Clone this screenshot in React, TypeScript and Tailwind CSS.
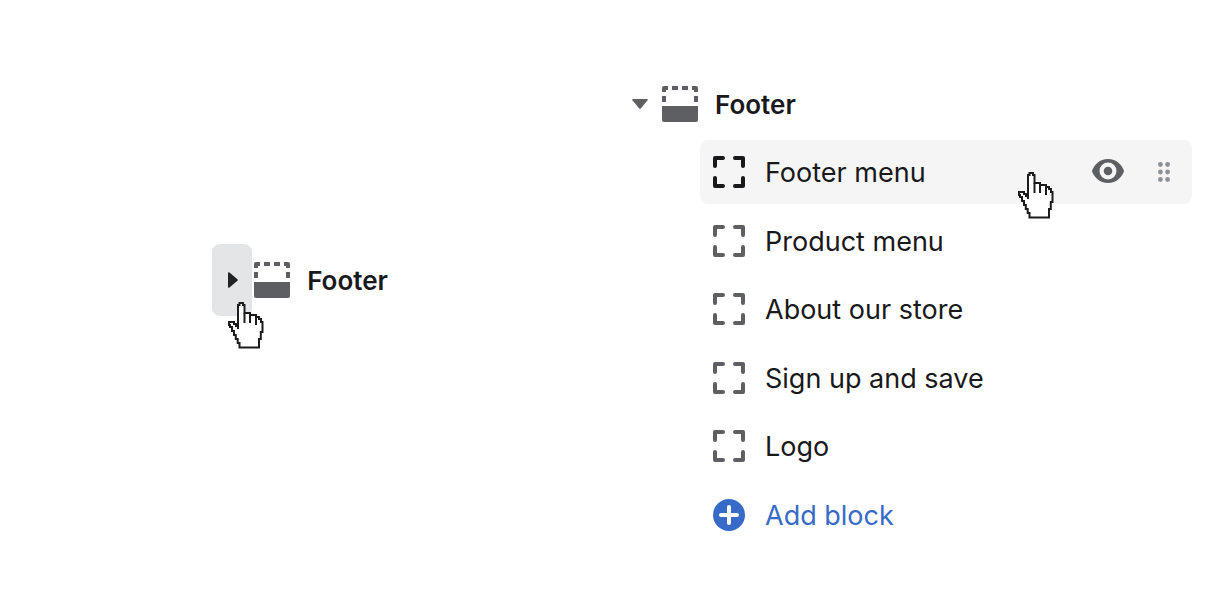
import React from "react";

const blocks = ["Footer menu", "Product menu", "About our store", "Sign up and save", "Logo"];

function HandCursor({ className }: { className: string }) {
  return (
    <svg
      aria-hidden="true"
      viewBox="0 0 36 47"
      className={`pointer-events-none absolute h-[47px] w-9 ${className}`}
      fill="none"
      stroke="#1c1c1e"
      strokeWidth="2"
    >
      <path
        d="M10 24V3H11.5V1H15V3H16.5V11H22V13H28V15H31V17H33V20H34.5V30H32.8V37H31V45.5H11.5V41H9.7V37H7.8V33H6V29H4V25H2V23H1V20H6V22H8V24Z"
        fill="#fff"
      />
      <path d="M10 23V27M16.5 11V21M22 13V21M28 15V23" />
    </svg>
  );
}

function FooterIcon() {
  return (
    <svg aria-hidden="true" viewBox="0 0 36 36" className="size-9 shrink-0 fill-[#5e5f63]">
      <path d="M0 20H36V34Q36 36 34 36H2Q0 36 0 34Z" />
      <path d="M0 6V2Q0 0 2 0H6V4H4V6ZM30 0H34Q36 0 36 2V6H32V4H30ZM10 0H16V4H10ZM20 0H26V4H20ZM0 10H4V16H0ZM32 10H36V16H32Z" />
    </svg>
  );
}

function BlockIcon({ className }: { className: string }) {
  return (
    <svg
      aria-hidden="true"
      viewBox="0 0 32 32"
      className={`size-8 shrink-0 fill-none ${className}`}
      strokeWidth="4"
      strokeLinecap="round"
      strokeLinejoin="round"
    >
      <path d="M2 10V2H10M22 2H30V10M30 22V30H22M10 30H2V22" />
    </svg>
  );
}

export default function App() {
  return (
    <main className="grid min-h-screen grid-cols-2 content-start bg-white pt-[68px] font-['Inter',sans-serif] text-[#19191b]">
      <section className="flex items-center justify-center pr-[15px] pb-14" aria-label="Collapsed section">
        <div className="flex items-center">
          <div className="relative">
            <button
              type="button"
              aria-label="Expand Footer"
              aria-expanded="false"
              className="flex h-[72px] w-10 items-center justify-center rounded-lg bg-[#e4e5e7]"
            >
              <svg aria-hidden="true" viewBox="0 0 10 16" className="ml-0.5 h-4 w-2.5 fill-[#202223]">
                <path d="M0 1.2Q0-.5 1.5.6L9.4 7.2Q10.3 8 9.4 8.8L1.5 15.4Q0 16.5 0 14.8Z" />
              </svg>
            </button>
            <HandCursor className="top-[58px] left-4" />
          </div>
          <div className="ml-0.5">
            <FooterIcon />
          </div>
          <h2 className="ml-[17px] pt-0.5 text-[26px] leading-9 font-semibold">Footer</h2>
        </div>
      </section>

      <section className="pr-[38px] pl-[17px]" aria-label="Expanded section">
        <div className="flex h-[72px] items-center">
          <button type="button" aria-label="Collapse Footer" aria-expanded="true" className="mr-3.5 flex h-9 items-center">
            <svg aria-hidden="true" viewBox="0 0 16 10" className="h-2.5 w-4 fill-[#5e5f63]">
              <path d="M1.2 0Q-.5 0 .6 1.5L7.2 9.4Q8 10.3 8.8 9.4L15.4 1.5Q16.5 0 14.8 0Z" />
            </svg>
          </button>
          <FooterIcon />
          <h2 className="ml-[17px] pt-0.5 text-[26px] leading-9 font-semibold">Footer</h2>
        </div>

        <ul className="ml-[68px] flex min-h-[407px] flex-col justify-between text-[27px] leading-9">
          {blocks.map((name, index) => (
            <li
              key={name}
              className={`relative flex h-16 items-center rounded-lg pr-[22px] pl-[13px] ${index === 0 ? "bg-[#f5f5f5]" : ""}`}
            >
              <BlockIcon className={index === 0 ? "stroke-[#19191b]" : "stroke-[#5e5f63]"} />
              <span className="ml-5 grow pt-0.5 whitespace-nowrap">{name}</span>
              {index === 0 && (
                <>
                  <button type="button" aria-label="Hide block" className="mr-[34px] pb-0.5">
                    <svg aria-hidden="true" viewBox="0 0 32 24" className="h-6 w-8">
                      <path
                        d="M16 0C24.5 0 29.5 5.8 31.6 10.8Q32.1 12 31.6 13.2C29.5 18.2 24.5 24 16 24S2.5 18.2.4 13.2Q-.1 12 .4 10.8C2.5 5.8 7.5 0 16 0Z"
                        fill="#5e5f63"
                      />
                      <circle cx="16" cy="12" r="6.4" fill="#5e5f63" stroke="#f5f5f5" strokeWidth="4.2" />
                    </svg>
                  </button>
                  <button type="button" aria-label="Reorder block">
                    <svg aria-hidden="true" viewBox="0 0 12 20" className="h-5 w-3 fill-[#8c9196]">
                      {[2.5, 10, 17.5].map((y) => (
                        <g key={y}>
                          <circle cx="2.4" cy={y} r="2.4" />
                          <circle cx="9.6" cy={y} r="2.4" />
                        </g>
                      ))}
                    </svg>
                  </button>
                  <HandCursor className="top-8 left-[318px]" />
                </>
              )}
            </li>
          ))}
          <li>
            <button type="button" className="flex h-16 items-center pl-[13px] text-[#386bc8]">
              <svg aria-hidden="true" viewBox="0 0 32 32" className="size-8 shrink-0">
                <circle cx="16" cy="16" r="16" fill="currentColor" />
                <path d="M16 8V24M8 16H24" stroke="#fff" strokeWidth="4" strokeLinecap="round" />
              </svg>
              <span className="ml-5 pt-0.5 whitespace-nowrap">Add block</span>
            </button>
          </li>
        </ul>
      </section>
    </main>
  );
}
